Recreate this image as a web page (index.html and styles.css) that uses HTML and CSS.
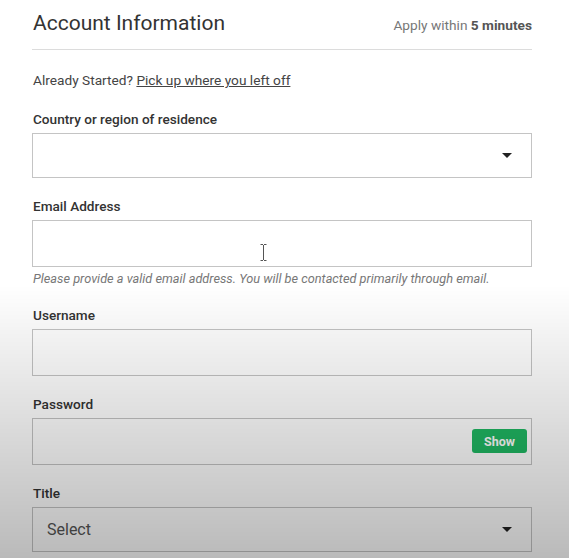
FILE: index.html
```html
<!DOCTYPE html>
<html lang="en">
<head>
  <meta charset="UTF-8">
  <meta name="viewport" content="width=device-width, initial-scale=1.0">
  <title>Account Information</title>
  <link rel="stylesheet" href="styles.css">
</head>
<body>
  <div class="app_form">
    <div class="form_head">
      <h1>Account Information</h1>
      <span class="apply_tm">Apply within <b>5 minutes</b></span>
    </div>

    <p class="resume_ln">Already Started? <a href="#">Pick up where you left off</a></p>

    <div class="fld">
      <label for="cntry">Country or region of residence</label>
      <div class="sel_wrap">
        <select id="cntry">
          <option value=""></option>
        </select>
      </div>
    </div>

    <div class="fld fld_hint">
      <label for="eml">Email Address</label>
      <div class="inp_wrap">
        <input type="text" id="eml">
        <!-- mouse cursor from the capture -->
        <svg class="ibeam" width="7" height="17" viewBox="0 0 7 17">
          <path d="M0.5 0.5h2.5M4 0.5h2.5M3.5 1v15M0.5 16.5h2.5M4 16.5h2.5" stroke="#555" stroke-width="1" fill="none"/>
        </svg>
      </div>
      <p class="hint">Please provide a valid email address. You will be contacted primarily through email.</p>
    </div>

    <div class="fld">
      <label for="usr">Username</label>
      <input type="text" id="usr">
    </div>

    <div class="fld">
      <label for="pwd">Password</label>
      <div class="inp_wrap">
        <input type="password" id="pwd">
        <button class="shw_btn" type="button">Show</button>
      </div>
    </div>

    <div class="fld">
      <label for="ttl">Title</label>
      <div class="sel_wrap">
        <select id="ttl">
          <option value="">Select</option>
          <option value="mr">Mr.</option>
          <option value="ms">Ms.</option>
        </select>
      </div>
    </div>
  </div>
  <div class="vid_shade"></div>
</body>
</html>
```

FILE: styles.css
```css
:root {
  --txt: #333;
  --muted: #666;
  --line: #dcdcdc;
  --field: #c4c4c4;
  --green: #20b863;
}

body {
  font-family: Roboto, "Liberation Sans", sans-serif;
  background-color: #fff;
  color: var(--txt);
  margin: 0;
  padding: 0;
  overflow: hidden;
}

.app_form {
  width: 500px;
  margin-left: 32px;
}

.form_head {
  display: flex;
  justify-content: space-between;
  align-items: baseline;
  padding: 9px 0 12px 1px;
  border-bottom: 1px solid var(--line);
}

h1 {
  margin: 0;
  font-size: 21px;
  line-height: 28px;
  font-weight: 400;
  color: #333;
}

.apply_tm {
  font-size: 13.7px;
  color: #777;
}

.apply_tm b {
  color: #555;
  font-weight: 700;
}

.resume_ln {
  margin: 22px 0 0 1px;
  font-size: 13.7px;
  line-height: 16px;
  color: #444;
}

.resume_ln a {
  color: #444;
  text-decoration: underline;
}

.fld {
  margin-top: 20px;
}

.resume_ln + .fld { margin-top: 23px; }
.fld_hint + .fld { margin-top: 21px; }

label {
  display: block;
  margin: 0 0 6px 1px;
  font-size: 13.6px;
  line-height: 16px;
  font-weight: 500;
  color: #333;
}

input, select {
  display: block;
  width: 100%;
  box-sizing: border-box;
  border: 1px solid var(--field);
  border-radius: 0;
  background: #fff;
  font-family: inherit;
  margin: 0;
}

input {
  height: 47px;
  padding: 0 14px;
  font-size: 15px;
}

select {
  -webkit-appearance: none;
  appearance: none;
  height: 45px;
  padding: 0 14px;
  font-size: 16px;
  color: #555;
}

.sel_wrap, .inp_wrap {
  position: relative;
}

.sel_wrap::after {
  content: "";
  position: absolute;
  right: 20px;
  top: 20px;
  border-left: 5px solid transparent;
  border-right: 5px solid transparent;
  border-top: 5px solid #222;
  pointer-events: none;
}

.ibeam {
  position: absolute;
  left: 228px;
  top: 24px;
}

.hint {
  margin: 5px 0 0 1px;
  font-size: 12.75px;
  line-height: 14px;
  font-style: italic;
  color: #777;
}

.shw_btn {
  position: absolute;
  right: 5px;
  top: 11px;
  width: 55px;
  height: 24px;
  border: none;
  border-radius: 3px;
  background-color: var(--green);
  color: #fff;
  font-family: inherit;
  font-size: 12.5px;
  font-weight: 700;
  cursor: pointer;
}

/* dark fade over the bottom of the frame */
.vid_shade {
  position: fixed;
  inset: 0;
  pointer-events: none;
  background: linear-gradient(to bottom, rgba(0,0,0,0) 285px, rgba(0,0,0,0.27) 100%);
}
```
